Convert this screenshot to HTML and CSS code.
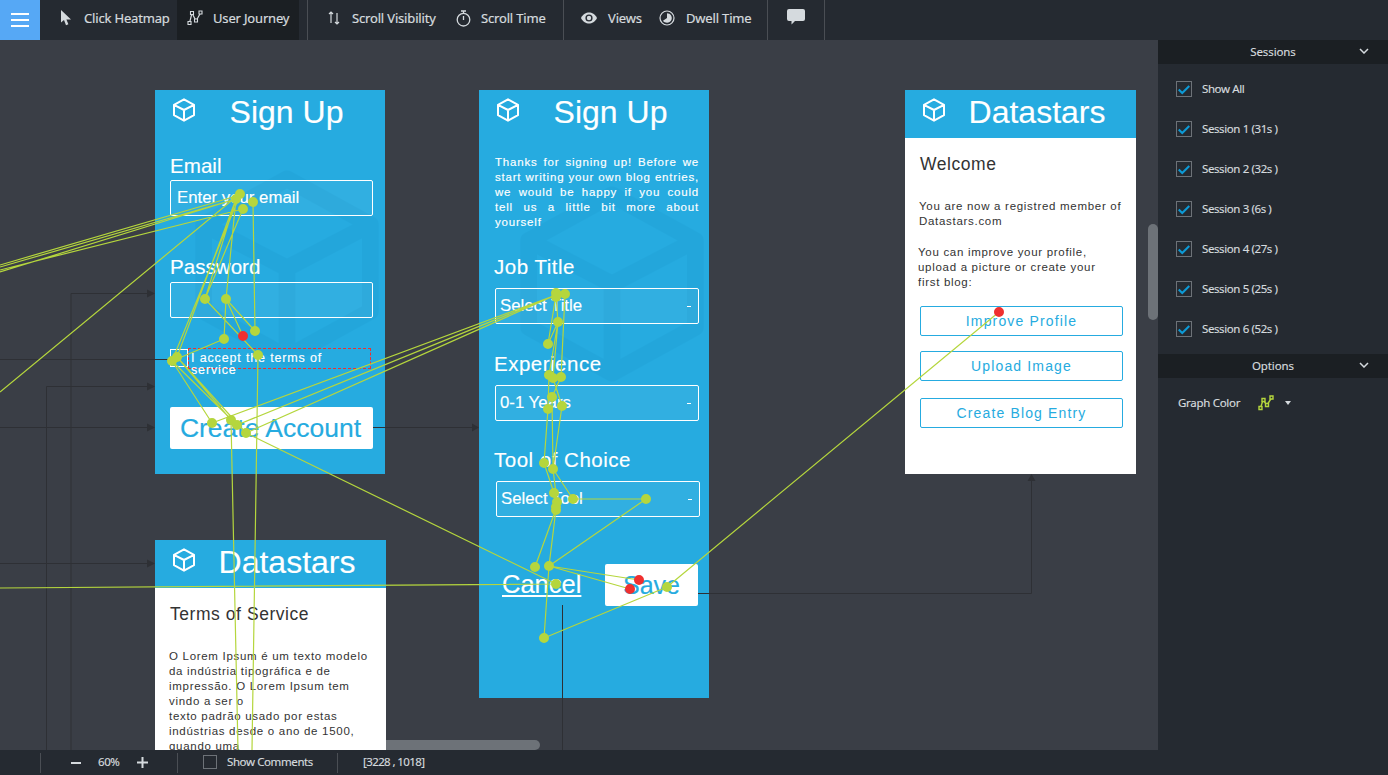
FILE: index.html
```html
<!DOCTYPE html>
<html lang="en">
<head>
  <meta charset="UTF-8" />
  <title>User Journey</title>
  <link rel="stylesheet" href="styles.css">
</head>
<body>

<svg class="defs" width="0" height="0">
  <symbol id="cube" viewBox="0 0 24 24">
    <path d="M12 1.3 22 6.8V17.2L12 22.7 2 17.2V6.8ZM2 6.8 12 12 22 6.8M12 12V22.7" fill="none" stroke="currentColor" stroke-width="2" stroke-linejoin="round"/>
  </symbol>
  <symbol id="tick" viewBox="0 0 16 16">
    <path d="M2 8.5 6 12.5 14 4.5" fill="none" stroke="#0d9ad6" stroke-width="2.4"/>
  </symbol>
  <symbol id="chevron" viewBox="0 0 10 6">
    <path d="M1 1 5 5 9 1" fill="none" stroke="#d5dade" stroke-width="1.5"/>
  </symbol>
</svg>

<header class="topbar">
  <a class="menu-btn"><span></span><span></span><span></span></a>

  <div class="nav-group">
    <a class="nav-item nav-click">
      <svg class="icon" width="12" height="16" viewBox="0 0 12 16"><path d="M1 0V12.5L4 10 6 15.3 8.4 14.3 6.4 9.4H11Z" fill="#d5dade"/></svg>
      <span>Click Heatmap</span>
    </a>
    <a class="nav-item nav-journey active">
      <svg class="icon" width="16" height="16" viewBox="0 0 16 16"><path d="M2.5 13 5 3M5 3 9 11M9 11 13.5 3" fill="none" stroke="#d5dade" stroke-width="1.2"/><path d="M1 11.5h3v3H1zM3.5 1.5h3v3h-3zM7.5 9h3v3h-3zM12 1h3v3h-3z" fill="#1b1f23" stroke="#d5dade" stroke-width="1.1"/></svg>
      <span>User Journey</span>
    </a>
  </div>

  <div class="nav-group nav-group-scroll">
    <a class="nav-item nav-visibility">
      <svg class="icon" width="12" height="14" viewBox="0 0 12 14"><path d="M3 12V1M1 3 3 1 5 3M9 2V13M7 11 9 13 11 11" fill="none" stroke="#d5dade" stroke-width="1.2"/></svg>
      <span>Scroll Visibility</span>
    </a>
    <a class="nav-item nav-time">
      <svg class="icon" width="15" height="17" viewBox="0 0 15 17"><circle cx="7.5" cy="9.7" r="6.3" fill="none" stroke="#d5dade" stroke-width="1.3"/><path d="M5 1h5M7.5 1v2M7.5 6v4" fill="none" stroke="#d5dade" stroke-width="1.3"/></svg>
      <span>Scroll Time</span>
    </a>
  </div>

  <div class="nav-group nav-group-views">
    <a class="nav-item nav-views">
      <svg class="icon" width="16" height="12" viewBox="0 0 16 12"><path d="M0 6C2 2 5 .5 8 .5S14 2 16 6C14 10 11 11.5 8 11.5S2 10 0 6Z" fill="#d5dade"/><circle cx="8" cy="6" r="3.6" fill="#252a31"/><circle cx="8" cy="6" r="2.2" fill="#d5dade"/></svg>
      <span>Views</span>
    </a>
    <a class="nav-item nav-dwell">
      <svg class="icon" width="16" height="16" viewBox="0 0 16 16"><circle cx="8" cy="8" r="7" fill="none" stroke="#d5dade" stroke-width="1.2"/><path d="M8 8V3.2A4.8 4.8 0 1 1 4 10.7Z" fill="#d5dade"/></svg>
      <span>Dwell Time</span>
    </a>
  </div>

  <div class="nav-group nav-group-comment">
    <svg width="18" height="16" viewBox="0 0 18 16"><path d="M2 0H16Q18 0 18 2V10Q18 12 16 12H8L4.5 15.5V12H2Q0 12 0 10V2Q0 0 2 0Z" fill="#d5dade"/></svg>
  </div>
</header>

<div class="main">
  <div class="canvas">
    <div class="scroll-v"></div>
    <div class="scroll-h"></div>

    <!-- sign up screen -->
    <div class="card card-signup">
      <div class="card-head">
        <svg class="cube"><use href="#cube"/></svg>
        <h1>Sign Up</h1>
      </div>
      <div class="card-body">
        <svg class="watermark"><use href="#cube"/></svg>
        <div class="label label-first">Email</div>
        <input class="input" type="text" placeholder="Enter your email" />
        <div class="label label-next">Password</div>
        <input class="input input-pass" type="text" />
        <div class="terms-row">
          <span class="terms-box"></span>
          <span class="terms-text">I accept the terms of<br>service</span>
        </div>
        <a class="btn-create">Create Account</a>
      </div>
    </div>

    <!-- profile screen -->
    <div class="card card-profile">
      <div class="card-head">
        <svg class="cube"><use href="#cube"/></svg>
        <h1>Sign Up</h1>
      </div>
      <div class="card-body">
        <svg class="watermark"><use href="#cube"/></svg>
        <p class="intro">Thanks for signing up! Before we start writing your own blog entries, we would be happy if you could tell us a little bit more about yourself</p>
        <div class="label label-job">Job Title</div>
        <div class="select"><span>Select Title</span><i></i></div>
        <div class="label label-exp">Experience</div>
        <div class="select"><span>0-1 Years</span><i></i></div>
        <div class="label label-tool">Tool of Choice</div>
        <div class="select select-tool"><span>Select Tool</span><i></i></div>
        <div class="actions">
          <a class="btn-cancel">Cancel</a>
          <a class="btn-save">Save</a>
        </div>
      </div>
    </div>

    <!-- welcome screen -->
    <div class="card card-welcome">
      <div class="card-head">
        <svg class="cube"><use href="#cube"/></svg>
        <h1>Datastars</h1>
      </div>
      <div class="card-body">
        <h2 class="welcome-title">Welcome</h2>
        <p class="copy copy-first">You are now a registred member of<br>Datastars.com</p>
        <p class="copy copy-second">You can improve your profile,<br>upload a picture or create your<br>first blog:</p>
        <div class="welcome-actions">
          <a class="btn-outline">Improve Profile</a>
          <a class="btn-outline">Upload Image</a>
          <a class="btn-outline">Create Blog Entry</a>
        </div>
      </div>
    </div>

    <!-- terms screen -->
    <div class="card card-terms">
      <div class="card-head">
        <svg class="cube"><use href="#cube"/></svg>
        <h1>Datastars</h1>
      </div>
      <div class="card-body">
        <h2 class="terms-title">Terms of Service</h2>
        <p class="copy copy-terms">O Lorem Ipsum é um texto modelo<br>da indústria tipográfica e de<br>impressão. O Lorem Ipsum tem<br>vindo a ser o<br>texto padrão usado por estas<br>indústrias desde o ano de 1500,<br>quando uma</p>
      </div>
    </div>

    <!-- connectors and journey graph, in page coordinates -->
    <svg class="graph" viewBox="0 40 1158 710">
      <path class="wire" d="M0 359.5H170M71 750V293.5H148M46.5 750V386.5H148M0 427.5H148M0 563.5H148M373 427.5H473M562.5 605V750M698 593.5H1031.5V480"/>
      <path class="wire-head" d="M147 289.5 155 293.5 147 297.5ZM147 382.5 155 386.5 147 390.5ZM147 423.5 155 427.5 147 431.5ZM147 559.5 155 563.5 147 567.5ZM472 423.5 479 427.5 472 431.5ZM1027.5 481 1031.5 474 1035.5 481Z"/>

      <path class="trail" d="M0 265 240 195M0 267 236 199M0 270 243 209M0 272 236 199M0 392 236 197M0 588 556 584
        M240 195 172 361M236 199 177 357M243 209 205 299M236 199 205 299M236 199 226 299M253 202 255 331
        M226 299 224 339M226 299 243 336M226 299 255 331M205 299 258 355M224 339 172 361
        M177 357 231 420M172 361 212 423M172 361 237 425M177 357 246 433
        M231 420 238 750M258 355 252 750
        M212 423 556 295M237 425 556 295M246 433 556 295M246 433 556 584
        M556 295 558 322M565 294 561 377M556 295 548 344M558 322 548 344M558 322 553 378M558 322 549 375
        M549 375 548 409M561 377 552 397M552 397 553 469M553 378 562 406M562 406 553 469M548 409 544 463
        M544 463 554 493M553 469 573 499M553 469 557 502M573 499 646 499M646 499 549 566
        M556 509 535 567M556 509 549 566M549 566 544 638M549 566 630 589M549 566 639 580
        M544 638 667 587M667 587 999 312"/>
      <path class="dots" d="M240 194h0M236 199h0M253 202h0M243 209h0M205 299h0M226 299h0M255 331h0M224 339h0M258 355h0M177 357h0M172 361h0M212 423h0M231 420h0M237 425h0M246 433h0
        M556 293h0M556 297h0M565 294h0M558 322h0M548 344h0M549 375h0M553 378h0M561 377h0M552 397h0M548 409h0M562 406h0M544 463h0M553 469h0
        M554 493h0M557 502h0M556 507h0M556 510h0M573 499h0M646 499h0M535 567h0M549 566h0M556 584h0M544 638h0M667 587h0"/>
      <path class="dots-red" d="M243 336h0M639 580h0M630 589h0M999 312h0"/>
    </svg>
  </div>

  <aside class="side">
    <div class="side-head"><span>Sessions</span><svg class="chevron"><use href="#chevron"/></svg></div>
    <div class="session-list">
      <div class="session"><span class="check"><svg><use href="#tick"/></svg></span><span>Show All</span></div>
      <div class="session"><span class="check"><svg><use href="#tick"/></svg></span><span>Session 1 (31s )</span></div>
      <div class="session"><span class="check"><svg><use href="#tick"/></svg></span><span>Session 2 (32s )</span></div>
      <div class="session"><span class="check"><svg><use href="#tick"/></svg></span><span>Session 3 (6s )</span></div>
      <div class="session"><span class="check"><svg><use href="#tick"/></svg></span><span>Session 4 (27s )</span></div>
      <div class="session"><span class="check"><svg><use href="#tick"/></svg></span><span>Session 5 (25s )</span></div>
      <div class="session"><span class="check"><svg><use href="#tick"/></svg></span><span>Session 6 (52s )</span></div>
    </div>
    <div class="side-head"><span>Options</span><svg class="chevron"><use href="#chevron"/></svg></div>
    <div class="option-row">
      <span class="option-name">Graph Color</span>
      <svg width="16" height="16" viewBox="0 0 16 16"><path d="M2.5 13 5 5M5 5 9 10M9 10 13.5 3" fill="none" stroke="#b5d63d" stroke-width="1.4"/><path d="M1 11.5h3v3H1zM4 3.5h3v3H4zM7.5 8.5h3v3h-3zM12 1h3v3h-3z" fill="#252a31" stroke="#b5d63d" stroke-width="1.4"/></svg>
      <span class="option-caret"></span>
    </div>
  </aside>
</div>

<footer class="statusbar">
  <div class="zoom-box">
    <svg width="10" height="10" viewBox="0 0 10 10"><path d="M0 4h10v2H0z" fill="#d5dade"/></svg>
    <span class="zoom-value">60%</span>
    <svg width="11" height="11" viewBox="0 0 11 11"><path d="M0 4.5h11v2H0zM4.5 0h2v11h-2z" fill="#d5dade"/></svg>
  </div>
  <div class="comments-box"><span class="check check-empty"></span><span>Show Comments</span></div>
  <div class="coords"><span>[3228 , 1018]</span></div>
</footer>

</body>
</html>
```

FILE: styles.css
```css
:root {
  --bar: #252a31;
  --bar-dark: #1b1f23;
  --canvas: #3a3e46;
  --blue: #26abe0;
  --line: #4a4e54;
  --text: #d5dade;
  --green: #b5d63d;
}

* {
  box-sizing: border-box;
}

html, body {
  height: 100%;
}

body {
  margin: 0;
  display: flex;
  flex-direction: column;
  overflow: hidden;
  background: var(--canvas);
  color: var(--text);
  font-family: 'Noto Sans', sans-serif;
  font-size: 12px;
}

.defs {
  position: absolute;
}

/* top bar */
.topbar {
  height: 40px;
  flex: none;
  display: flex;
  background: var(--bar);
  font-size: 13px;
  letter-spacing: -0.17px;
  -webkit-text-stroke: 0.2px;
}

.menu-btn {
  width: 40px;
  display: flex;
  flex-direction: column;
  justify-content: center;
  gap: 4px;
  padding: 0 11px;
  background: #56a8f5;
}

.menu-btn span {
  height: 2px;
  background: white;
}

.nav-group {
  display: flex;
  border-right: 1px solid var(--line);
  padding-right: 8px;
}

.nav-item {
  display: flex;
  align-items: center;
  height: 40px;
  white-space: nowrap;
}

.nav-item span {
  margin-top: -4px;
}

.nav-item .icon {
  flex: none;
  margin-top: -4px;
}

.nav-item.active {
  background: var(--bar-dark);
}

.nav-click { width: 137px; padding-left: 20px; gap: 12px; }
.nav-journey { width: 122px; padding-left: 10px; gap: 10px; }

.nav-group-scroll { width: 256px; padding: 0 0 0 20px; }
.nav-visibility { width: 128px; gap: 12px; }
.nav-time { gap: 10px; }

.nav-group-views { width: 204px; padding: 0 0 0 17px; }
.nav-views { width: 78px; gap: 11px; }
.nav-dwell { gap: 11px; }

.nav-group-comment {
  width: 57px;
  padding: 9px 0 0 19px;
}

/* canvas */
.main {
  flex: 1;
  min-height: 0;
  display: flex;
}

.canvas {
  position: relative;
  flex: 1;
  overflow: hidden;
  background: var(--canvas);
}

.scroll-v {
  position: absolute;
  right: 0;
  top: 184px;
  width: 10px;
  height: 96px;
  border-radius: 5px;
  background: #6d7278;
}

.scroll-h {
  position: absolute;
  left: 300px;
  bottom: 0;
  width: 240px;
  height: 10px;
  border-radius: 5px;
  background: #6d7278;
}

.graph {
  position: absolute;
  left: 0;
  top: 0;
  width: 1158px;
  height: 710px;
}

.wire {
  fill: none;
  stroke: #2e3035;
  stroke-width: 1;
}

.wire-head {
  fill: #2e3035;
}

.trail {
  fill: none;
  stroke: var(--green);
  stroke-width: 1.2;
}

.dots, .dots-red {
  fill: none;
  stroke: var(--green);
  stroke-width: 10;
  stroke-linecap: round;
}

.dots-red {
  stroke: #f0302f;
}

/* cards */
.card {
  position: absolute;
  width: 230px;
  background: var(--blue);
  color: white;
  font-family: 'Liberation Sans', sans-serif;
  -webkit-text-stroke: 0.15px;
}

.card-signup { left: 155px; top: 50px; height: 384px; }
.card-profile { left: 479px; top: 50px; height: 608px; }
.card-welcome { left: 905px; top: 50px; width: 231px; height: 384px; background: white; }
.card-terms { left: 155px; top: 500px; width: 231px; height: 300px; background: white; }

.card-head {
  display: flex;
  height: 48px;
  padding: 0 8px 0 17px;
  background: var(--blue);
  color: white;
}

.cube {
  width: 24px;
  height: 24px;
  margin-top: 8px;
  flex: none;
}

.card-head h1 {
  flex: 1;
  margin: 0;
  font-size: 32px;
  font-weight: 400;
  line-height: 44px;
  text-align: center;
}

.card-body {
  position: relative;
  padding: 0 12px 0 15px;
}

.watermark {
  position: absolute;
  left: 32px;
  top: 9px;
  width: 200px;
  height: 210px;
  color: #1f9dd2;
  opacity: 0.3;
}

.card-profile .watermark {
  left: 33px;
  top: 24px;
}

.label {
  position: relative;
  font-size: 20.6px;
  line-height: 24px;
}

.label-first { margin-top: 16px; }
.label-next { margin-top: 39px; }

.input, .select {
  position: relative;
  display: flex;
  justify-content: space-between;
  align-items: center;
  width: 203px;
  height: 36px;
  margin-top: 2px;
  padding: 0 6px;
  background: rgba(255, 255, 255, 0.05);
  border: 1px solid white;
  border-radius: 2px;
  color: white;
  font-family: inherit;
  font-size: 16.8px;
  -webkit-text-stroke: 0.15px;
}

.input::placeholder {
  color: white;
  opacity: 1;
}

.input-pass {
  margin-top: 3px;
}

.terms-row {
  position: relative;
  display: flex;
  margin-top: 30px;
}

.terms-box {
  width: 18px;
  height: 18px;
  margin-top: 1px;
  border: 1px solid white;
}

.terms-text {
  width: 183px;
  height: 21px;
  padding: 3px 0 0 2px;
  border: 1px dashed #f0302f;
  font-size: 12.5px;
  letter-spacing: 0.85px;
  line-height: 12px;
}

.btn-create {
  position: relative;
  display: block;
  width: 203px;
  height: 42px;
  margin-top: 38px;
  padding-right: 2px;
  background: white;
  border-radius: 2px;
  color: var(--blue);
  font-size: 26.5px;
  line-height: 42px;
  text-align: center;
}

/* profile screen */
.card-profile .card-body {
  padding: 0 10px 0 16px;
}

.intro {
  position: relative;
  margin: 17px 0 0;
  font-size: 11.5px;
  letter-spacing: 0.8px;
  line-height: 15px;
  text-align: justify;
}

.label-job, .label-exp, .label-tool {
  margin-left: -1px;
  font-size: 20.5px;
  letter-spacing: 0.5px;
}

.label-job { margin-top: 25px; }
.label-exp { margin-top: 28px; }
.label-tool { margin-top: 27px; }

.select {
  width: 204px;
  margin-top: 9px;
  padding: 0 7px 0 4px;
}

.select i {
  width: 4px;
  height: 1px;
  background: white;
}

.select-tool {
  margin-left: 1px;
}

.actions {
  position: relative;
  display: flex;
  align-items: center;
  justify-content: space-between;
  height: 42px;
  margin: 47px 1px 0 0;
  padding-left: 7px;
}

.btn-cancel {
  font-size: 25.5px;
  line-height: 40px;
  margin-top: -2px;
  text-decoration: underline;
}

.btn-save {
  width: 93px;
  height: 42px;
  background: white;
  border-radius: 2px;
  color: var(--blue);
  font-size: 25px;
  line-height: 42px;
  text-align: center;
}

/* white screens */
.card-welcome .card-body, .card-terms .card-body {
  padding: 0 13px 0 14px;
  color: #333;
}

.welcome-title, .terms-title {
  margin: 14px 0 0 1px;
  font-size: 17.5px;
  font-weight: 400;
  line-height: 24px;
  letter-spacing: 0.55px;
  -webkit-text-stroke: 0;
}

.copy {
  margin: 0;
  font-size: 11.5px;
  letter-spacing: 0.7px;
  line-height: 15px;
  white-space: nowrap;
  -webkit-text-stroke: 0;
}

.copy-first { margin-top: 23px; }
.copy-second { margin-top: 16px; margin-left: -1px; }
.copy-terms { margin-top: 23px; }

.welcome-actions {
  display: flex;
  flex-direction: column;
  gap: 15px;
  margin: 16px 0 0 1px;
}

.btn-outline {
  width: 203px;
  height: 30px;
  border: 1px solid var(--blue);
  border-radius: 2px;
  color: var(--blue);
  font-size: 14px;
  letter-spacing: 1.15px;
  line-height: 28px;
  text-align: center;
  -webkit-text-stroke: 0;
}

.btn-outline:last-child {
  margin-top: 2px;
}

/* right panel */
.side {
  width: 230px;
  flex: none;
  background: var(--bar);
}

.side-head {
  position: relative;
  height: 24px;
  background: var(--bar-dark);
  font-size: 11.5px;
  line-height: 24px;
  text-align: center;
  letter-spacing: -0.1px;
  -webkit-text-stroke: 0.15px;
}

.chevron {
  position: absolute;
  right: 19px;
  top: 8px;
  width: 10px;
  height: 6px;
}

.session-list {
  padding: 5px 0;
}

.session {
  display: flex;
  align-items: center;
  gap: 10px;
  height: 40px;
  padding-left: 18px;
  font-size: 11.5px;
  letter-spacing: -0.4px;
  -webkit-text-stroke: 0.15px;
}

.session span:last-child {
  margin-top: -2px;
}

.check {
  width: 16px;
  height: 16px;
  flex: none;
  border: 1px solid #6d7278;
}

.check svg {
  display: block;
  width: 14px;
  height: 14px;
}

.option-row {
  display: flex;
  align-items: center;
  height: 50px;
  padding-left: 20px;
  font-size: 11.5px;
  letter-spacing: -0.3px;
  -webkit-text-stroke: 0.15px;
}

.option-name {
  width: 80px;
  margin-top: -2px;
}

.option-caret {
  margin-left: 11px;
  border-left: 3.5px solid transparent;
  border-right: 3.5px solid transparent;
  border-top: 4px solid var(--text);
}

/* status bar */
.statusbar {
  position: relative;
  height: 25px;
  flex: none;
  display: flex;
  align-items: center;
  padding-left: 40px;
  background: var(--bar);
  font-size: 11.5px;
  letter-spacing: -0.4px;
  -webkit-text-stroke: 0.15px;
}

.statusbar span {
  margin-top: -2px;
}

.zoom-box, .comments-box, .coords {
  display: flex;
  align-items: center;
  height: 20px;
  border-left: 1px solid var(--line);
}

.zoom-box {
  width: 137px;
  padding-left: 30px;
}

.zoom-value {
  width: 56px;
  padding-left: 17px;
}

.comments-box {
  width: 160px;
  gap: 10px;
  padding-left: 25px;
}

.check-empty {
  width: 14px;
  height: 14px;
}

.coords {
  padding-left: 25px;
  letter-spacing: -0.6px;
}
```
